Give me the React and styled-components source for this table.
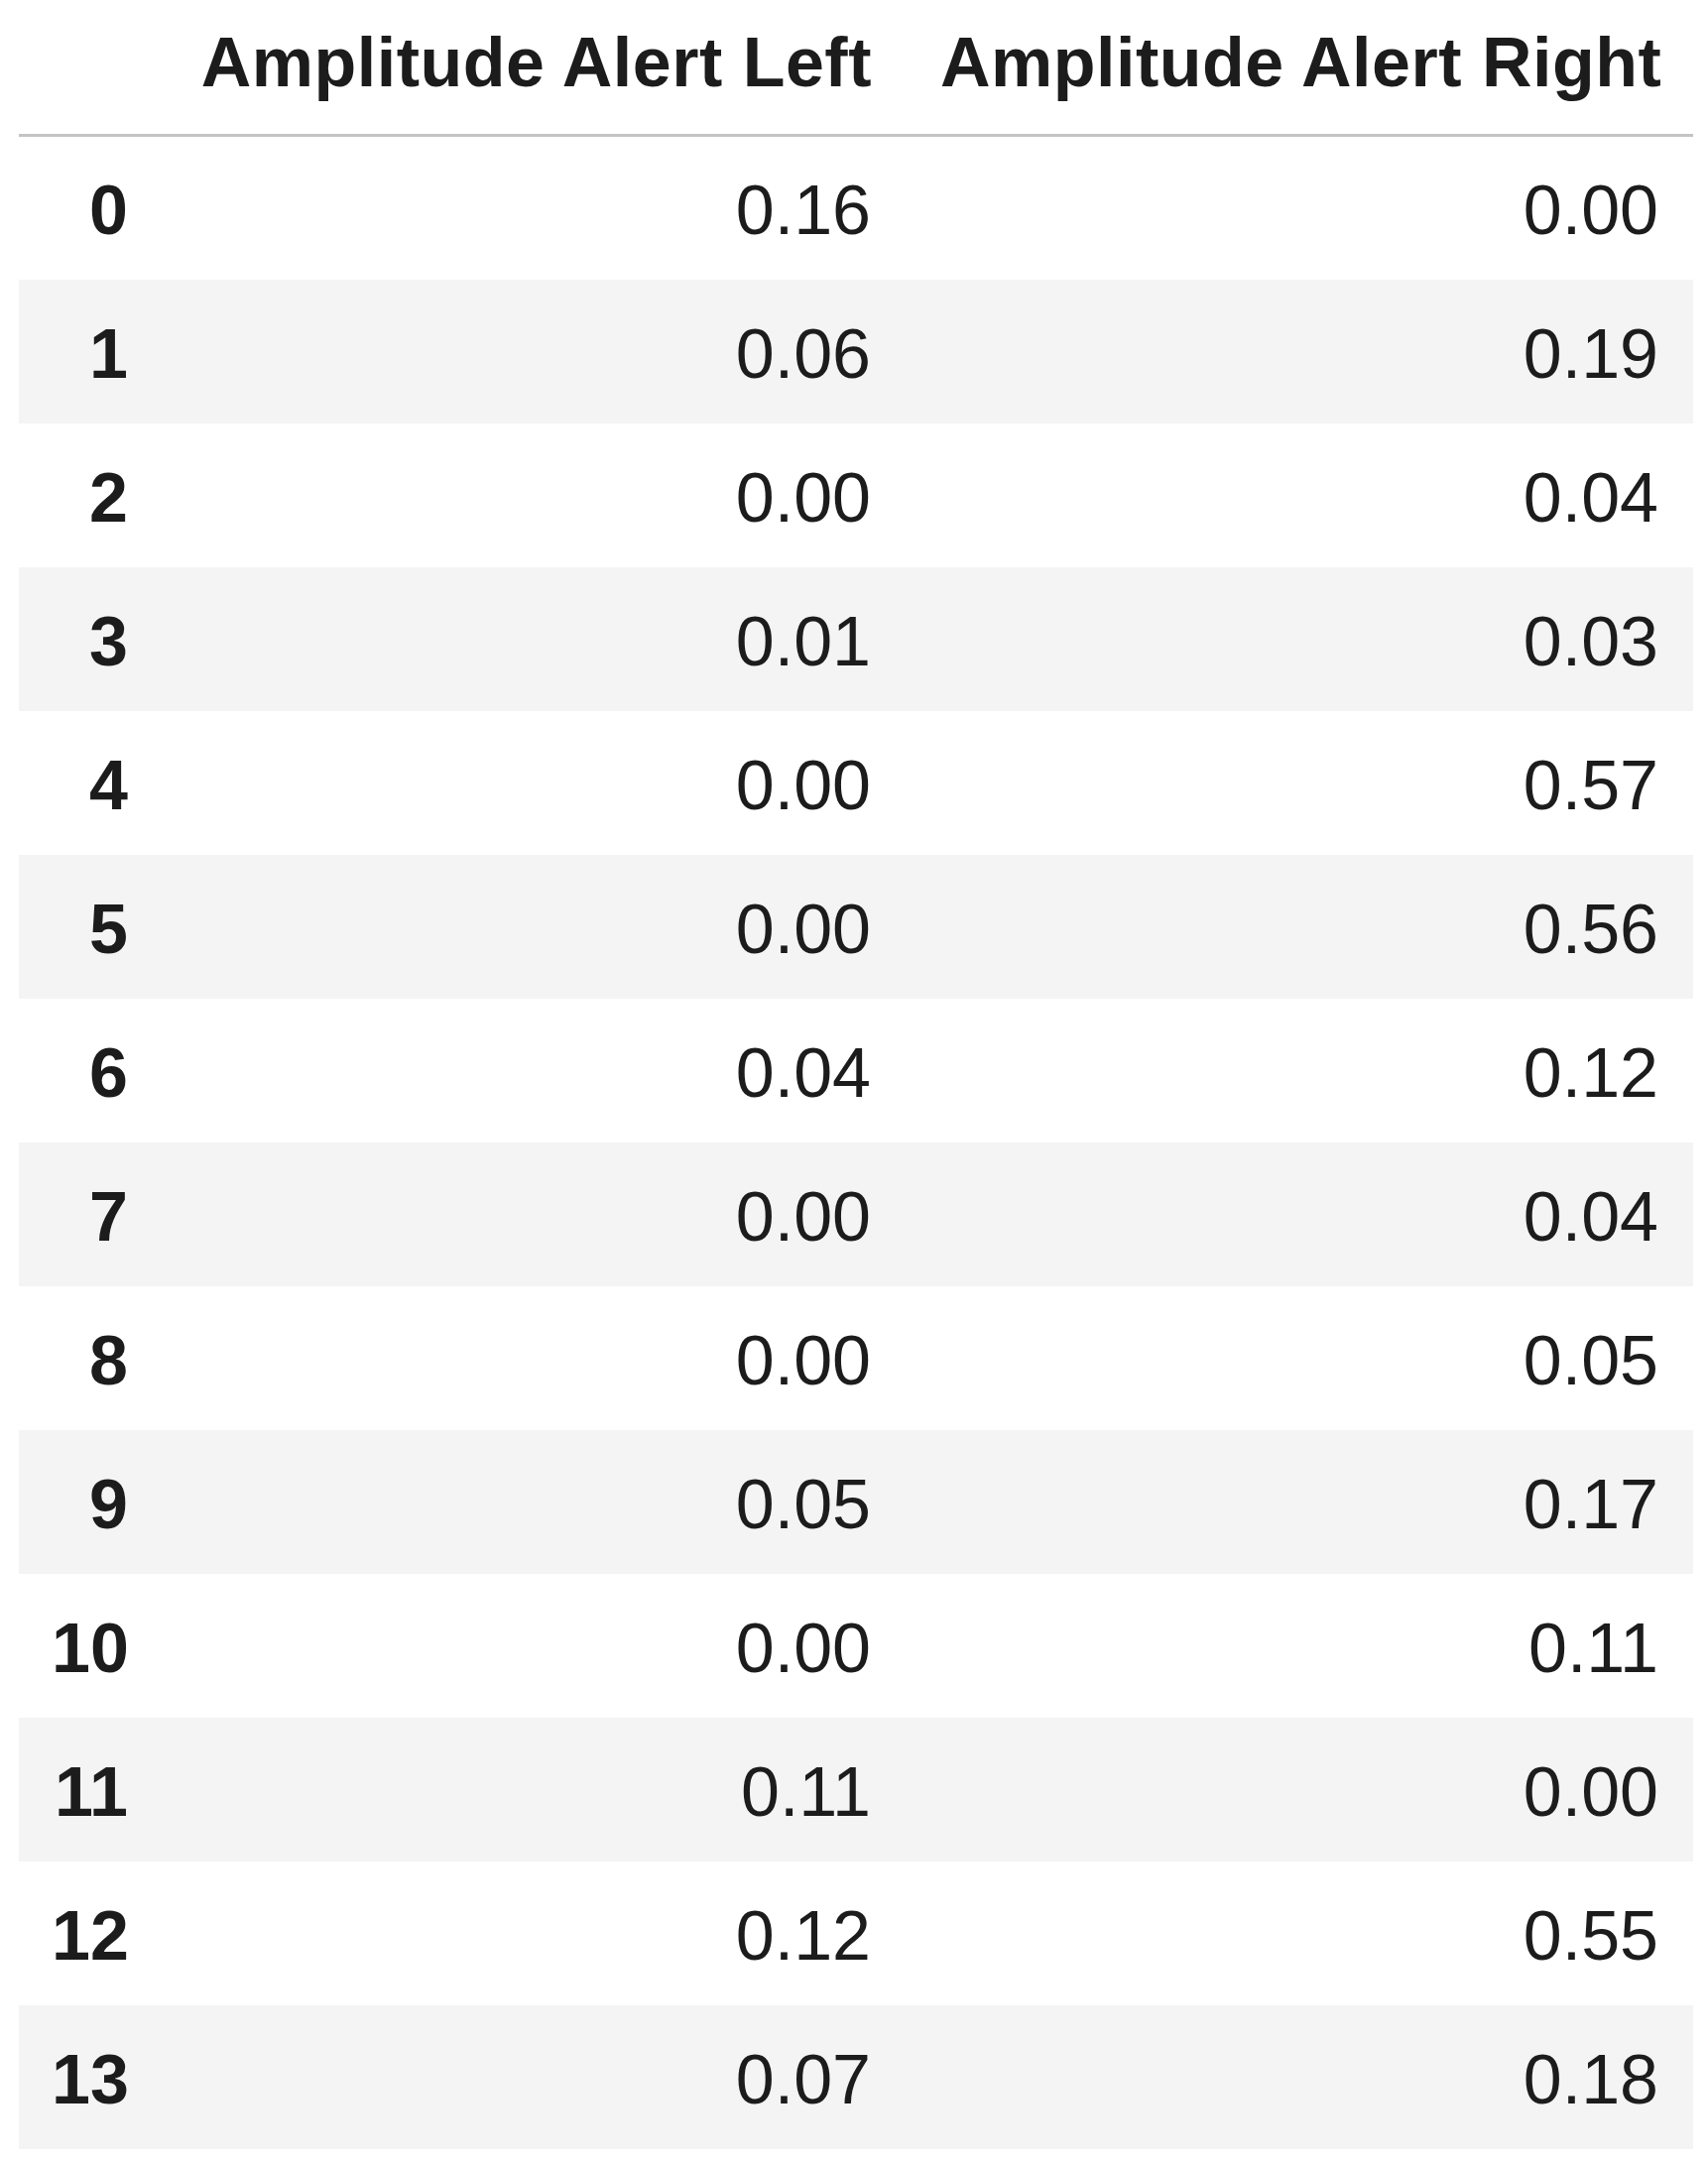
import React from "react";
import styled, { createGlobalStyle } from "styled-components";

const rows = [
  [0.16, 0.0],
  [0.06, 0.19],
  [0.0, 0.04],
  [0.01, 0.03],
  [0.0, 0.57],
  [0.0, 0.56],
  [0.04, 0.12],
  [0.0, 0.04],
  [0.0, 0.05],
  [0.05, 0.17],
  [0.0, 0.11],
  [0.11, 0.0],
  [0.12, 0.55],
  [0.07, 0.18],
];

const GlobalStyle = createGlobalStyle`
  body {
    margin: 0;
    background: #ffffff;
    font-family: "Liberation Sans", Arial, sans-serif;
    color: #1c1c1c;
  }
`;

const Wrapper = styled.div`
  padding-left: 19px;
`;

const Table = styled.table`
  border-collapse: collapse;
  border-spacing: 0;
  table-layout: fixed;
  width: 1688px;
  font-size: 70px;
  line-height: 84px;
`;

const HeadRow = styled.tr`
  border-bottom: 3px solid #c4c4c4;
`;

const HeadCell = styled.th`
  text-align: right;
  font-weight: 700;
  letter-spacing: 0.5px;
  padding: 21px 34px 30px 35px;
  white-space: nowrap;
  vertical-align: bottom;
`;

const Row = styled.tr`
  height: 145px;
  background: ${(p) => (p.$striped ? "#f4f4f4" : "#ffffff")};
`;

const IndexCell = styled.th`
  text-align: right;
  font-weight: 700;
  padding: 5px 37px 0 33px;
  vertical-align: middle;
`;

const ValueCell = styled.td`
  text-align: right;
  padding: 5px 35px 0;
  vertical-align: middle;
  white-space: nowrap;
`;

export default function App() {
  return (
    <Wrapper>
      <GlobalStyle />
      <Table>
        <colgroup>
          <col style={{ width: 147 }} />
          <col style={{ width: 747 }} />
          <col style={{ width: 794 }} />
        </colgroup>
        <thead>
          <HeadRow>
            <HeadCell />
            <HeadCell>Amplitude Alert Left</HeadCell>
            <HeadCell>Amplitude Alert Right</HeadCell>
          </HeadRow>
        </thead>
        <tbody>
          {rows.map(([left, right], i) => (
            <Row key={i} $striped={i % 2 === 1}>
              <IndexCell>{i}</IndexCell>
              <ValueCell>{left.toFixed(2)}</ValueCell>
              <ValueCell>{right.toFixed(2)}</ValueCell>
            </Row>
          ))}
        </tbody>
      </Table>
    </Wrapper>
  );
}
